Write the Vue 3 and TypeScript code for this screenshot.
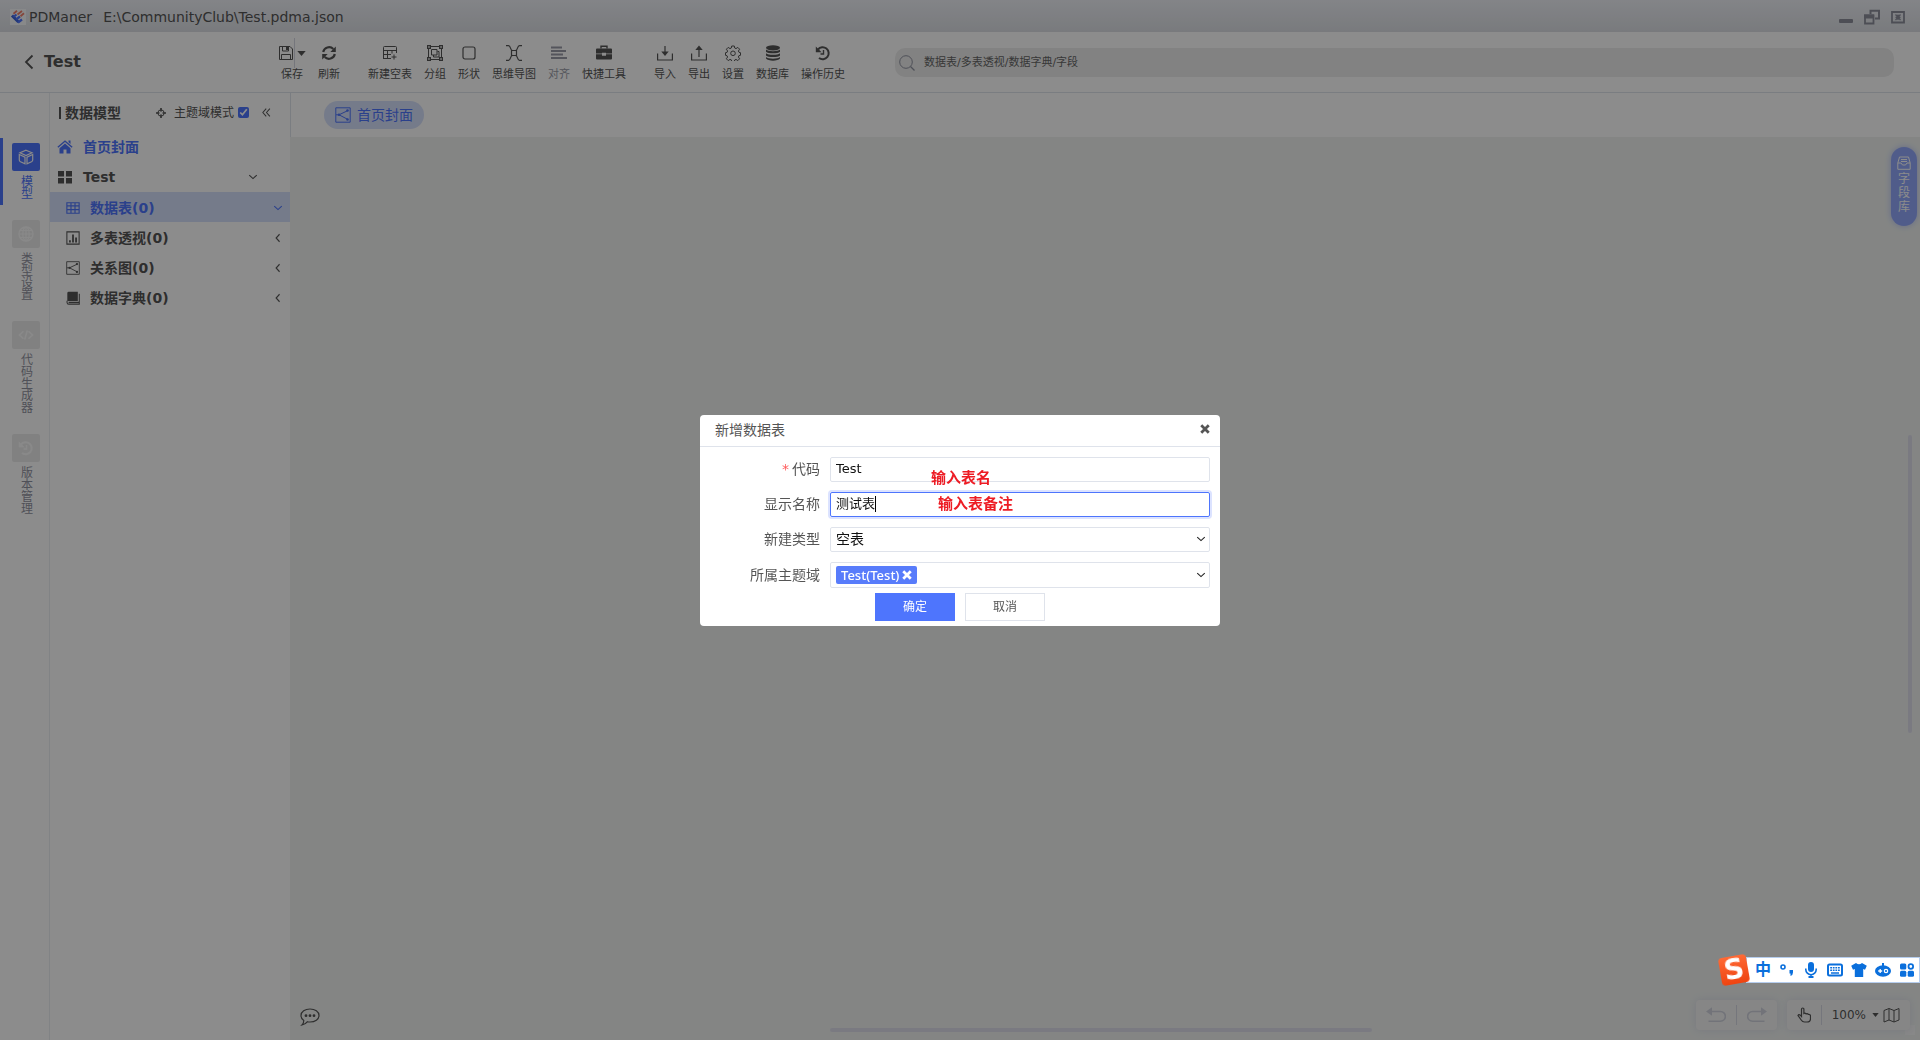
<script setup lang="ts">
import { ref } from 'vue'

interface Tool {
  label: string
  icon: string
  split?: boolean
  disabled?: boolean
  group?: boolean
}

const icons: Record<string, string> = {
  save: '<path d="M1.5 1.5h10.5l2.5 2.5v10.500h-13z" fill="none" stroke="currentColor"/><path d="M4.500 1.500v4.500h6v-4.500M3.500 14.500v-5h9v5" fill="none" stroke="currentColor"/><path d="M8 2h2v3h-2z" fill="currentColor"/>',
  refresh: '<path d="M2.200 7A6 6 0 0 1 12.300 4M13.800 9A6 6 0 0 1 3.700 12" fill="none" stroke="currentColor" stroke-width="2.200"/><path d="M14.800 1.500v5.500h-5.500zM1.200 14.500v-5.500h5.500z" fill="currentColor"/>',
  table: '<path d="M1.500 14V2.500a1 1 0 0 1 1-1h11a1 1 0 0 1 1 1V8M1.500 5.500h13M1.500 9.500h7.500M5.500 5.500v8.500M10 5.500v3M1.500 13.500h7.500M12 9.500v5M9.500 12h5" fill="none" stroke="currentColor"/>',
  group: '<path d="M1.500 1.500h13v13h-13z" fill="none" stroke="currentColor"/><path d="M0 0h4v4h-4zM12 0h4v4h-4zM0 12h4v4h-4zM12 12h4v4h-4z" fill="currentColor"/><path d="M1.200 1.200h1.500v1.500h-1.500zM13.300 1.200h1.500v1.500h-1.500zM1.200 13.300h1.500v1.500h-1.500zM13.300 13.300h1.500v1.500h-1.500z" fill="#fff"/><path d="M4.500 4.500h5.500v5.500h-5.500zM10.500 6.500h1.500v5.500h-5.500v-2" fill="none" stroke="currentColor"/>',
  shape: '<rect x="2" y="2" width="12" height="12" rx="2" fill="none" stroke="currentColor" stroke-width="1.200"/>',
  mind: '<path d="M5.500 5.500h5v5h-5zM0 .6h2.500c2.500 0 1.500 5 4 5M16 .6h-2.500c-2.500 0-1.500 5-4 5M0 15.400h2.500c2.500 0 1.500-5 4-5M16 15.400h-2.500c-2.500 0-1.500-5-4-5" fill="none" stroke="currentColor" stroke-width="1.200"/>',
  align: '<path d="M0 2.500h11M0 6h15M0 9.500h12M0 13h16" stroke="currentColor" stroke-width="2.200"/>',
  kit: '<path d="M5 3.500v-2.300h6v2.300" fill="none" stroke="currentColor" stroke-width="1.400"/><path d="M1 3.500h14a1 1 0 0 1 1 1v4h-6v-.8h-4v.8h-6v-4a1 1 0 0 1 1-1zM0 9.300h6v1.500h4v-1.500h6v4.200a1 1 0 0 1-1 1h-14a1 1 0 0 1-1-1z" fill="currentColor"/>',
  import: '<path d="M.6 8.500v6.500h14.800v-6.500M8 1v8" fill="none" stroke="currentColor" stroke-width="1.200"/><path d="M4.300 6.500h7.400l-3.700 4.500z" fill="currentColor"/>',
  export: '<path d="M.6 8.500v6.500h14.800v-6.500M8 3v9" fill="none" stroke="currentColor" stroke-width="1.200"/><path d="M4.300 5h7.400l-3.700-4.500z" fill="currentColor"/>',
  gear: '<path d="M6.700 1h2.600l.4 2 1.300.6 1.800-1.200 1.800 1.800-1.200 1.800.6 1.300 1.500.4v2.600l-1.600.4-.5 1.300 1.200 1.800-1.800 1.800-1.800-1.200-1.300.6-.4 1.500h-2.600l-.4-1.600-1.300-.5-1.800 1.200-1.800-1.800 1.200-1.800-.6-1.300-1.500-.4v-2.600l1.600-.4.5-1.300-1.200-1.800 1.800-1.800 1.800 1.200 1.300-.6z" fill="none" stroke="currentColor"/><circle cx="8" cy="8.300" r="2.300" fill="none" stroke="currentColor"/>',
  database: '<ellipse cx="8" cy="2.800" rx="7" ry="2.600" fill="currentColor"/><path d="M1 4.500c2 2.200 12 2.200 14 0v2.200c-2 2.200-12 2.200-14 0zM1 8.200c2 2.200 12 2.200 14 0v2.200c-2 2.200-12 2.200-14 0zM1 12c2 2.200 12 2.200 14 0v1.600c-2 2.700-12 2.700-14 0z" fill="currentColor"/>',
  history: '<path d="M3 4.500A6 6 0 1 1 4 13" fill="none" stroke="currentColor" stroke-width="2"/><path d="M.8 1.500v5.800h5.800z" fill="currentColor"/><path d="M8.500 5v4h-3" fill="none" stroke="currentColor" stroke-width="1.400"/>',
  cube: '<path d="M8 1.200l6 2.600-6 2.700-6-2.700zM1.300 5.500l5.700 2.600v6.700l-4.500-2.100q-1.200-.6-1.200-1.700zM14.700 5.500l-5.700 2.600v6.700l4.500-2.100q1.200-.6 1.200-1.700z" fill="none" stroke="currentColor" stroke-width="1.200"/>',
  globe: '<circle cx="8" cy="8" r="7" fill="none" stroke="currentColor" stroke-width="1.300"/><ellipse cx="8" cy="8" rx="3.200" ry="7" fill="none" stroke="currentColor" stroke-width="1.200"/><path d="M8 1v14M1 8h14M2.200 4.500h11.600M2.200 11.500h11.600" fill="none" stroke="currentColor" stroke-width="1.200"/>',
  code: '<path d="M5.500 4.200l-4 3.800 4 3.800M10.500 4.200l4 3.800-4 3.800M9.300 3.500l-2.600 9" fill="none" stroke="currentColor" stroke-width="1.500"/>',
  home: '<path d="M8 1.200l7.600 6.600-.9 1-6.700-5.800-6.700 5.800-.9-1zM11.500 1.500h2v3.500l-2-1.700zM8 4.500l5.500 4.700v5.300h-4v-4h-3v4h-4v-5.300z" fill="currentColor"/>',
  blocks: '<path d="M1 2h6v5.500h-6zM9 2h6v5.500h-6zM1 9h6v5.500h-6zM9 9h6v5.500h-6z" fill="currentColor"/>',
  grid: '<path d="M1 2h14v12h-14zM1 5.500h14M1 9.800h14M5.700 2v12M10.300 2v12" fill="none" stroke="currentColor" stroke-width="1.300"/>',
  chart: '<path d="M1 1h14v14h-14z" fill="none" stroke="currentColor" stroke-width="1.200"/><path d="M3.500 10.500h2v2.500h-2zM7 4h2v9h-2zM10.500 7.500h2v5.500h-2z" fill="currentColor"/>',
  relation: '<path d="M.8.800h14.400v14.400h-14.400zM13 3.500l-9 4.300 9 4.700M1 7.800h3" fill="none" stroke="currentColor"/><circle cx="12.500" cy="3.500" r="1.300" fill="currentColor"/><circle cx="12.500" cy="12.500" r="1.300" fill="currentColor"/><circle cx="4" cy="7.800" r="1.300" fill="currentColor"/>',
  book: '<path d="M3 .8h10.500v10.700h-12v-9q0-1.700 1.500-1.700z" fill="currentColor"/><path d="M1.200 11v2q0 2 2 2h12v-12M3 13h12" fill="none" stroke="currentColor" stroke-width="1.200"/>',
  target: '<circle cx="8" cy="8" r="5" fill="none" stroke="currentColor" stroke-width="1.600"/><path d="M8 0v5.500M8 10.500v5.500M0 8h5.500M10.500 8h5.500" stroke="currentColor" stroke-width="2.600"/>',
  down: '<path d="M2 5l6 5.500 6-5.500" fill="none" stroke="currentColor" stroke-width="1.800"/>',
  left: '<path d="M10.500 2l-5.500 6 5.500 6" fill="none" stroke="currentColor" stroke-width="1.800"/>',
  cross: '<path d="M2 2l12 12M14 2l-12 12" stroke="currentColor" stroke-width="4.500"/>',
}

const tools: Tool[] = [
  { label: '保存', icon: 'save', split: true },
  { label: '刷新', icon: 'refresh' },
  { label: '新建空表', icon: 'table', group: true },
  { label: '分组', icon: 'group' },
  { label: '形状', icon: 'shape' },
  { label: '思维导图', icon: 'mind' },
  { label: '对齐', icon: 'align', disabled: true },
  { label: '快捷工具', icon: 'kit' },
  { label: '导入', icon: 'import', group: true },
  { label: '导出', icon: 'export' },
  { label: '设置', icon: 'gear' },
  { label: '数据库', icon: 'database' },
  { label: '操作历史', icon: 'history' },
]

const rail = [
  { label: '模型', icon: 'cube', active: true },
  { label: '类型设置', icon: 'globe', active: false },
  { label: '代码生成器', icon: 'code', active: false },
  { label: '版本管理', icon: 'history', active: false },
]

const leaves = [
  { label: '数据表(0)', icon: 'grid', open: true },
  { label: '多表透视(0)', icon: 'chart', open: false },
  { label: '关系图(0)', icon: 'relation', open: false },
  { label: '数据字典(0)', icon: 'book', open: false },
]

const keyword = ref('')
const domainMode = ref(true)
const code = ref('Test')
const displayName = ref('测试表')
const kind = ref('empty')
const domain = ref('')
</script>

<template>
  <div class="app">
    <header class="titlebar">
      <svg class="logo" viewBox="0 0 16 16">
        <rect width="16" height="16" fill="#f8f9fc" />
        <path d="M2 6.500l6.500 6.500" stroke="#3a62d8" stroke-width="3" />
        <path d="M3.500 8l3-2.500M6 10.500l4-3M8 13.500l4-3" stroke="#4e75fd" stroke-width="2.200" />
        <path d="M3.500 4.800l3.500-3M7.500 5.500l4.500-3.500M10.500 7.200l3.500-3" stroke="#f0806c" stroke-width="1.800" />
      </svg>
      <span class="product">PDManer</span>
      <span class="path">E:\CommunityClub\Test.pdma.json</span>
      <div class="win">
        <button aria-label="最小化"><svg viewBox="0 0 16 16"><rect x="1" y="10" width="14" height="4" rx="1" fill="currentColor" /></svg></button>
        <button aria-label="还原"><svg viewBox="0 0 16 16"><path d="M6.500 5V1.800h8.500v7.700h-4" fill="none" stroke="currentColor" stroke-width="2" /><path d="M1 6.500h8.500v8h-8.500z" fill="none" stroke="currentColor" stroke-width="1.800" /><path d="M0 5.500h10v4h-10z" fill="currentColor" /></svg></button>
        <button aria-label="关闭"><svg viewBox="0 0 16 16"><path d="M2 3h12v10.500h-12z" fill="none" stroke="currentColor" stroke-width="1.800" /><path d="M5.500 5.500l5 5.500M10.500 5.500l-5 5.500M8 5.500v5.500M5.500 8.300h5" stroke="currentColor" stroke-width="1.300" /></svg></button>
      </div>
    </header>

    <div class="header">
      <div class="project">
        <button class="back" aria-label="返回"><svg viewBox="0 0 10 16"><path d="M8.500 1.500l-6.500 6.500 6.500 6.500" fill="none" stroke="currentColor" stroke-width="1.800" /></svg></button>
        <h1>Test</h1>
      </div>
      <nav class="toolbar">
        <button v-for="t in tools" :key="t.label" class="tool" :class="{ group: t.group, disabled: t.disabled, split: t.split }">
          <span class="glyph">
            <svg viewBox="0 0 16 16" v-html="icons[t.icon]"></svg>
            <span v-if="t.split" class="rule"></span>
            <svg v-if="t.split" class="caret" viewBox="0 0 10 6"><path d="M0 0h10l-5 6z" fill="currentColor" /></svg>
          </span>
          <span class="label">{{ t.label }}</span>
        </button>
      </nav>
      <label class="search">
        <svg viewBox="0 0 16 16"><circle cx="7" cy="7" r="6.300" fill="none" stroke="currentColor" /><path d="M11.500 11.500l4 4" stroke="currentColor" stroke-width="1.300" /></svg>
        <input v-model="keyword" type="text" aria-label="搜索" placeholder="数据表/多表透视/数据字典/字段">
      </label>
    </div>

    <div class="workspace">
      <aside class="rail">
        <button v-for="r in rail" :key="r.label" class="rail-item" :class="{ active: r.active }">
          <span class="square"><svg viewBox="0 0 16 16" v-html="icons[r.icon]"></svg></span>
          <span class="vertical">{{ r.label }}</span>
        </button>
      </aside>

      <aside class="sidebar">
        <div class="side-head">
          <h2>数据模型</h2>
          <svg class="target" viewBox="0 0 16 16" v-html="icons.target"></svg>
          <label class="mode">主题域模式<input v-model="domainMode" type="checkbox"></label>
          <button class="collapse" aria-label="收起"><svg viewBox="0 0 16 16"><path d="M7.500 1l-6 7 6 7M14 1l-6 7 6 7" fill="none" stroke="currentColor" stroke-width="1.800" /></svg></button>
        </div>
        <ul class="tree">
          <li class="node home"><svg class="ico" viewBox="0 0 16 16" v-html="icons.home"></svg><a href="#">首页封面</a></li>
          <li class="node"><svg class="ico" viewBox="0 0 16 16" v-html="icons.blocks"></svg><a href="#">Test</a><svg class="chev" viewBox="0 0 16 16" v-html="icons.down"></svg></li>
          <li v-for="l in leaves" :key="l.label" class="node leaf" :class="{ active: l.open }">
            <svg class="ico" viewBox="0 0 16 16" v-html="icons[l.icon]"></svg>
            <a href="#">{{ l.label }}</a>
            <svg class="chev" viewBox="0 0 16 16" v-html="l.open ? icons.down : icons.left"></svg>
          </li>
        </ul>
      </aside>

      <main class="main">
        <div class="tabs">
          <button class="tab"><svg viewBox="0 0 16 16" v-html="icons.relation"></svg>首页封面</button>
        </div>
        <div class="canvas">
          <button class="library">
            <svg viewBox="0 0 14 14"><path d="M2.500 1h9l1.700 6v6.300h-12.400v-6.300zM1 7h3l1.500 2h3l1.500-2h3M4 3.500h6M4 5.500h6" fill="none" stroke="currentColor" /></svg>
            <span>字段库</span>
          </button>
          <span class="vbar"></span>
          <span class="hbar"></span>
          <span class="corner"></span>
          <button class="chat" aria-label="消息">
            <svg viewBox="0 0 20 18"><path d="M10 1c5 0 9 2.700 9 6.500s-4 6.500-9 6.500q-1.500 0-2.500-.3-2 2.600-5.500 3.300 1.800-1.800 1.800-4.400-2.800-1.800-2.800-5.100c0-3.800 4-6.500 9-6.500z" fill="none" stroke="currentColor" stroke-width="1.200" /><circle cx="6" cy="7.700" r="1.400" fill="currentColor" /><circle cx="10" cy="7.700" r="1.400" fill="currentColor" /><circle cx="14" cy="7.700" r="1.400" fill="currentColor" /></svg>
          </button>
          <div class="controls">
            <div class="panel history">
              <button aria-label="撤销"><svg viewBox="0 0 20 16"><path d="M4 4.500h10.500a4.800 4.800 0 0 1 0 9.700h-12" fill="none" stroke="currentColor" stroke-width="1.600" /><path d="M0 4.500l6-4.200v8.400z" fill="currentColor" /></svg></button>
              <span class="sep"></span>
              <button aria-label="重做"><svg viewBox="0 0 20 16"><path d="M16 4.500h-10.500a4.800 4.800 0 0 0 0 9.700h12" fill="none" stroke="currentColor" stroke-width="1.600" /><path d="M20 4.500l-6-4.200v8.400z" fill="currentColor" /></svg></button>
            </div>
            <div class="panel zoom">
              <button aria-label="拖动"><svg class="hand" viewBox="0 0 14 16"><path d="M4.500 9.500v-7.300q0-1.200 1.200-1.200t1.200 1.200v4.300q1.200-.8 2.200.4 1.300-.7 2.200.5 2.200-.3 2.200 1.600v2.500q0 3.500-3.500 3.500h-2.500q-2 0-3.300-2l-3.200-4.500q.8-1.600 2.300-.3z" fill="none" stroke="currentColor" stroke-width="1.200" /></svg></button>
              <span class="sep"></span>
              <button class="percent">100%<svg viewBox="0 0 8 5"><path d="M0 0h8l-4 5z" fill="currentColor" /></svg></button>
              <button aria-label="缩略图"><svg class="map" viewBox="0 0 17 16"><path d="M1 3.500l5-2 5 2 5-2v11.500l-5 2-5-2-5 2zM6 1.500v11.500M11 3.500v11.500" fill="none" stroke="currentColor" /></svg></button>
            </div>
          </div>
        </div>
      </main>
    </div>

    <div class="mask">
      <form class="dialog" role="dialog" aria-labelledby="dlg-title" @submit.prevent>
        <div class="dlg-head">
          <h3 id="dlg-title">新增数据表</h3>
          <button type="button" class="close" aria-label="关闭"><svg viewBox="0 0 16 16" v-html="icons.cross"></svg></button>
        </div>
        <div class="dlg-body">
          <div class="row">
            <label for="f-code"><i>*</i>代码</label>
            <div class="field"><input id="f-code" v-model="code" type="text"><span class="note first">输入表名</span></div>
          </div>
          <div class="row">
            <label for="f-name">显示名称</label>
            <div class="field focus"><input id="f-name" v-model="displayName" type="text"><span class="cursor"></span><span class="note second">输入表备注</span></div>
          </div>
          <div class="row">
            <label for="f-kind">新建类型</label>
            <div class="field">
              <select id="f-kind" v-model="kind"><option value="empty">空表</option></select>
              <svg class="arrow" viewBox="0 0 16 16" v-html="icons.down"></svg>
            </div>
          </div>
          <div class="row">
            <label for="f-domain">所属主题域</label>
            <div class="field tags">
              <span class="tag">Test(Test)<button type="button" aria-label="移除"><svg viewBox="0 0 16 16" v-html="icons.cross"></svg></button></span>
              <select id="f-domain" v-model="domain"><option value=""></option></select>
              <svg class="arrow" viewBox="0 0 16 16" v-html="icons.down"></svg>
            </div>
          </div>
        </div>
        <div class="dlg-foot">
          <button type="submit" class="ok">确定</button>
          <button type="button" class="cancel">取消</button>
        </div>
      </form>
    </div>

    <div class="ime">
      <span class="sogou">S</span>
      <span class="zh">中</span>
      <svg viewBox="0 0 16 16"><circle cx="4" cy="5" r="2" fill="none" stroke="currentColor" stroke-width="1.600" /><path d="M10.500 8h3.500v2.500q0 2.500-2.500 3.500v-2.500h-1z" fill="currentColor" /></svg>
      <svg viewBox="0 0 16 16"><rect x="5" y="0" width="6" height="10" rx="3" fill="currentColor" /><path d="M2.800 6.500v1a5.200 5.200 0 0 0 10.400 0v-1M8 12.500v3" fill="none" stroke="currentColor" stroke-width="1.600" /><path d="M5.500 14h5v2h-5z" fill="currentColor" /></svg>
      <svg viewBox="0 0 16 16"><rect x="1" y="2.500" width="14" height="11" rx="1.500" fill="none" stroke="currentColor" stroke-width="2" /><path d="M3.200 5.800h9.600M3.200 8.300h9.600" stroke="currentColor" stroke-width="1.600" stroke-dasharray="1.800 .8" /><path d="M4 11h8" stroke="currentColor" stroke-width="1.500" /></svg>
      <svg viewBox="0 0 16 16"><path d="M5 1q3 2.600 6 0l4.800 2.800-1.800 4-1.800-.8v8h-8.400v-8l-1.800.8-1.800-4z" fill="currentColor" /></svg>
      <svg viewBox="0 0 16 16"><path d="M7 1h2v3h-2z" fill="currentColor" /><ellipse cx="8" cy="9" rx="8" ry="5.800" fill="currentColor" /><path d="M3.200 9h4M5.200 7v4" stroke="#fff" stroke-width="1.300" /><circle cx="11" cy="9" r="1.700" fill="none" stroke="#fff" stroke-width="1.200" /></svg>
      <svg viewBox="0 0 16 16"><rect x="1" y="1.500" width="6.300" height="6" rx="1.500" fill="currentColor" /><rect x="1" y="8.800" width="6.300" height="6" rx="1.500" fill="currentColor" /><rect x="8.700" y="8.800" width="6.300" height="6" rx="1.500" fill="currentColor" /><circle cx="11.800" cy="4.500" r="2.300" fill="none" stroke="currentColor" stroke-width="1.800" /></svg>
    </div>
  </div>
</template>

<style>
body {
  background: #f0f3f1;
}
</style>

<style scoped>
* {
  box-sizing: border-box;
}

.app {
  display: flex;
  flex-direction: column;
  min-height: 100vh;
  font: 14px/20px "DejaVu Sans", "Noto Sans CJK SC", sans-serif;
  color: #555;
}

button {
  padding: 0;
  border: 0;
  background: none;
  font: inherit;
  color: inherit;
}

h1, h2, h3, ul {
  margin: 0;
  padding: 0;
}

svg {
  display: block;
  flex: none;
}

a {
  color: inherit;
  text-decoration: none;
}

.titlebar {
  display: flex;
  align-items: center;
  height: 32px;
  padding: 1px 14px 0 10px;
  background: linear-gradient(#eff1f7, #dcdfe4);
}

.logo {
  width: 16px;
  height: 16px;
  margin-right: 3px;
}

.product {
  margin-right: 11px;
}

.win {
  display: flex;
  gap: 10px;
  margin-left: auto;
  color: #8c8f9c;
}

.win svg {
  width: 16px;
  height: 16px;
}

.header {
  display: flex;
  align-items: center;
  height: 61px;
  padding-right: 26px;
  background: #fff;
  border-bottom: 1px solid #dfe3eb;
}

.project {
  display: flex;
  align-items: center;
  gap: 10px;
  width: 278px;
  padding-left: 24px;
}

.back svg {
  width: 10px;
  height: 16px;
}

h1 {
  font-size: 16px;
  line-height: 24px;
}

.toolbar {
  display: flex;
  gap: 12px;
  padding-bottom: 4px;
}

.tool {
  display: flex;
  flex-direction: column;
  align-items: center;
  font-size: 11px;
  line-height: 14px;
  white-space: nowrap;
}

.tool.group {
  margin-left: 16px;
}

.tool.disabled {
  color: #9a9ca8;
}

.glyph {
  display: flex;
  align-items: center;
  height: 30px;
}

.glyph svg {
  width: 16px;
  height: 16px;
}

.rule {
  width: 1px;
  height: 30px;
  margin-right: 2px;
  background: #d5d7e2;
}

.tool .caret {
  width: 9px;
  height: 5px;
}

.search {
  display: flex;
  flex: 1;
  align-items: center;
  gap: 9px;
  height: 29px;
  margin-left: 50px;
  padding: 2px 4px 0;
  border-radius: 10px;
  background: #ededed;
  color: #8f92a0;
}

.search svg {
  width: 16px;
  height: 16px;
}

.search input {
  flex: 1;
  height: 20px;
  padding: 0;
  border: 0;
  outline: 0;
  background: none;
  font: inherit;
  font-size: 11px;
}

.search input::placeholder {
  color: #666;
}

.workspace {
  display: flex;
  flex: 1;
}

.rail {
  display: flex;
  flex-direction: column;
  gap: 10px;
  width: 50px;
  padding-top: 45px;
  background: #fff;
  border-right: 1px solid #eceef2;
}

.rail-item {
  display: flex;
  flex-direction: column;
  gap: 5px;
  padding: 5px 9px;
  border-left: 3px solid transparent;
  font-size: 12px;
  line-height: 12px;
  color: #9192a0;
}

.rail-item.active {
  border-color: #4e75fd;
  color: #4e75fd;
}

.square {
  display: grid;
  place-items: center;
  width: 28px;
  height: 28px;
  border-radius: 2px;
  background: #ececec;
  color: #fafafa;
}

.active .square {
  background: #4e75fd;
}

.square svg {
  width: 16px;
  height: 16px;
}

.vertical {
  width: 12px;
  margin-left: 9px;
  word-break: break-all;
}

.sidebar {
  width: 240px;
  background: #fff;
}

.side-head {
  display: flex;
  align-items: center;
  height: 39px;
  padding: 0 19px 0 9px;
}

h2 {
  display: flex;
  align-items: center;
  gap: 4px;
  font-size: 14px;
  line-height: 20px;
}

h2::before {
  content: "";
  width: 2px;
  height: 12px;
  background: #555;
}

.target {
  width: 10px;
  height: 10px;
  margin: 0 8px 0 auto;
}

.mode {
  display: flex;
  align-items: center;
  gap: 4px;
  font-size: 12px;
}

.mode input {
  width: 11px;
  height: 11px;
  margin: 0;
  accent-color: #4e75fd;
}

.collapse {
  margin-left: 13px;
}

.collapse svg {
  width: 9px;
  height: 9px;
}

.tree {
  list-style: none;
}

.node {
  display: flex;
  align-items: center;
  height: 30px;
  padding: 0 32px 0 7px;
  font-weight: bold;
}

.node a {
  flex: 1;
}

.node .ico {
  width: 16px;
  height: 16px;
  margin-right: 10px;
}

.node .chev {
  width: 10px;
  height: 10px;
}

.leaf {
  padding: 1px 7px 0 16px;
}

.leaf .ico {
  width: 14px;
  height: 14px;
}

.home,
.leaf.active {
  color: #4e75fd;
}

.leaf.active {
  background: #d6e0fb;
}

.main {
  display: flex;
  flex: 1;
  flex-direction: column;
}

.tabs {
  height: 44px;
  padding: 8px 33px;
  background: #fff;
  border-left: 1px solid #dfe3eb;
}

.tab {
  display: flex;
  align-items: center;
  gap: 6px;
  height: 28px;
  padding: 0 11px;
  border-radius: 14px;
  background: #d6e0fb;
  color: #4e75fd;
}

.tab svg {
  width: 16px;
  height: 16px;
}

.canvas {
  position: relative;
  flex: 1;
  background: #f0f3f1;
}

/* Tools floating over the drawing surface */
.library {
  position: absolute;
  top: 10px;
  right: 3px;
  display: flex;
  flex-direction: column;
  align-items: center;
  gap: 2px;
  width: 26px;
  padding: 9px 0 12px;
  border-radius: 13px;
  background: #93a8fb;
  box-shadow: 0 0 6px #b4c2f8;
  font-size: 12px;
  line-height: 14px;
  color: #fff;
}

.library svg {
  width: 14px;
  height: 14px;
}

.library span {
  width: 12px;
  word-break: break-all;
}

.vbar,
.hbar {
  position: absolute;
  border-radius: 2px;
  background: #dfdfec;
}

.vbar {
  top: 33%;
  right: 8px;
  width: 4px;
  height: 33%;
}

.hbar {
  right: 548px;
  bottom: 8px;
  left: 540px;
  height: 4px;
}

.corner {
  position: absolute;
  right: 5px;
  bottom: 5px;
  width: 10px;
  height: 10px;
  background: #f8f8f8;
}

.chat {
  position: absolute;
  bottom: 14px;
  left: 10px;
}

.chat svg {
  width: 20px;
  height: 18px;
}

.controls {
  position: absolute;
  right: 10px;
  bottom: 10px;
  display: flex;
  gap: 10px;
}

.panel {
  display: flex;
  align-items: center;
  height: 30px;
  padding: 0 10px;
  border-radius: 4px;
  background: #f5f5f5;
  box-shadow: 0 0 8px #dcdee8;
}

.sep {
  width: 1px;
  height: 20px;
  margin: 0 10px;
  background: #d5d7e2;
}

.history {
  color: #cfd2dd;
}

.history svg {
  width: 20px;
  height: 16px;
}

.zoom .hand {
  width: 14px;
  height: 16px;
}

.percent {
  display: flex;
  align-items: center;
  gap: 6px;
  margin-right: 4px;
  font-size: 12px;
}

.percent svg {
  width: 7px;
  height: 4px;
}

.zoom .map {
  width: 17px;
  height: 16px;
}

.mask {
  position: fixed;
  inset: 0;
  display: grid;
  place-items: center;
  background: rgba(0, 0, 0, 0.45);
}

.dialog {
  width: 520px;
  border-radius: 4px;
  background: #fff;
}

.dlg-head {
  display: flex;
  align-items: center;
  justify-content: space-between;
  height: 32px;
  padding: 0 10px 0 15px;
  border-bottom: 1px solid #dfe3eb;
}

h3 {
  font-size: 14px;
  font-weight: normal;
  line-height: 20px;
}

.close {
  padding-bottom: 2px;
}

.close svg {
  width: 10px;
  height: 10px;
}

.dlg-body {
  display: flex;
  flex-direction: column;
  gap: 10px;
  padding: 10px 10px 5px 0;
}

.row {
  display: flex;
  align-items: center;
  gap: 10px;
}

.row label {
  width: 120px;
  text-align: right;
}

.row i {
  margin-right: 3px;
  font-style: normal;
  color: #ff5b5b;
}

.field {
  position: relative;
  display: flex;
  flex: 1;
  align-items: center;
  height: 25px;
  border: 1px solid #dfe3eb;
  border-radius: 2px;
}

.field.tags {
  height: 26px;
  padding-left: 5px;
}

.field.focus {
  border-color: #4e75fd;
  box-shadow: 0 0 0 2px #dce3ff;
}

.field input,
.field select {
  flex: 1;
  height: 20px;
  padding: 0 5px;
  border: 0;
  outline: 0;
  background: none;
  appearance: none;
  font: inherit;
  font-size: 13px;
  color: #111;
}

.field select {
  font-size: 14px;
}

.arrow {
  position: absolute;
  right: 3px;
  width: 10px;
  height: 10px;
  color: #222;
  pointer-events: none;
}

.cursor {
  position: absolute;
  left: 44px;
  width: 1px;
  height: 16px;
  background: #000;
}

.note {
  position: absolute;
  font-size: 15px;
  font-weight: bold;
  color: #ed1c24;
}

.note.first {
  top: 10px;
  left: 100px;
}

.note.second {
  left: 107px;
}

.tag {
  display: flex;
  align-items: center;
  gap: 3px;
  height: 18px;
  padding: 0 5px;
  border-radius: 2px;
  background: #587cfb;
  font: 500 13px/18px "Noto Sans", sans-serif;
  color: #fff;
}

.tag svg {
  width: 10px;
  height: 10px;
}

.dlg-foot {
  display: flex;
  justify-content: center;
  gap: 10px;
  padding-bottom: 5px;
}

.dlg-foot button {
  width: 80px;
  height: 28px;
  border: 1px solid #dfe3eb;
  font-size: 12px;
}

.dlg-foot .ok {
  border-color: #4e75fd;
  background: #4e75fd;
  color: #fff;
}

/* Input method bar, docked above everything */
.ime {
  position: fixed;
  right: 0;
  bottom: 57px;
  display: flex;
  align-items: center;
  gap: 8px;
  height: 26px;
  padding-right: 4px;
  border: 1px solid #b5cdee;
  background: #fff;
  color: #0a6fdc;
}

.ime svg {
  width: 16px;
  height: 16px;
}

.zh {
  width: 16px;
  font-size: 16px;
  font-weight: bold;
  line-height: 24px;
}

.sogou {
  width: 28px;
  height: 28px;
  margin: 0 -1px 0 -27px;
  border-radius: 4px;
  background: linear-gradient(#ff6a35, #ee4310);
  transform: rotate(-10deg);
  font-size: 28px;
  font-weight: bold;
  line-height: 28px;
  text-align: center;
  color: #fff;
}
</style>
